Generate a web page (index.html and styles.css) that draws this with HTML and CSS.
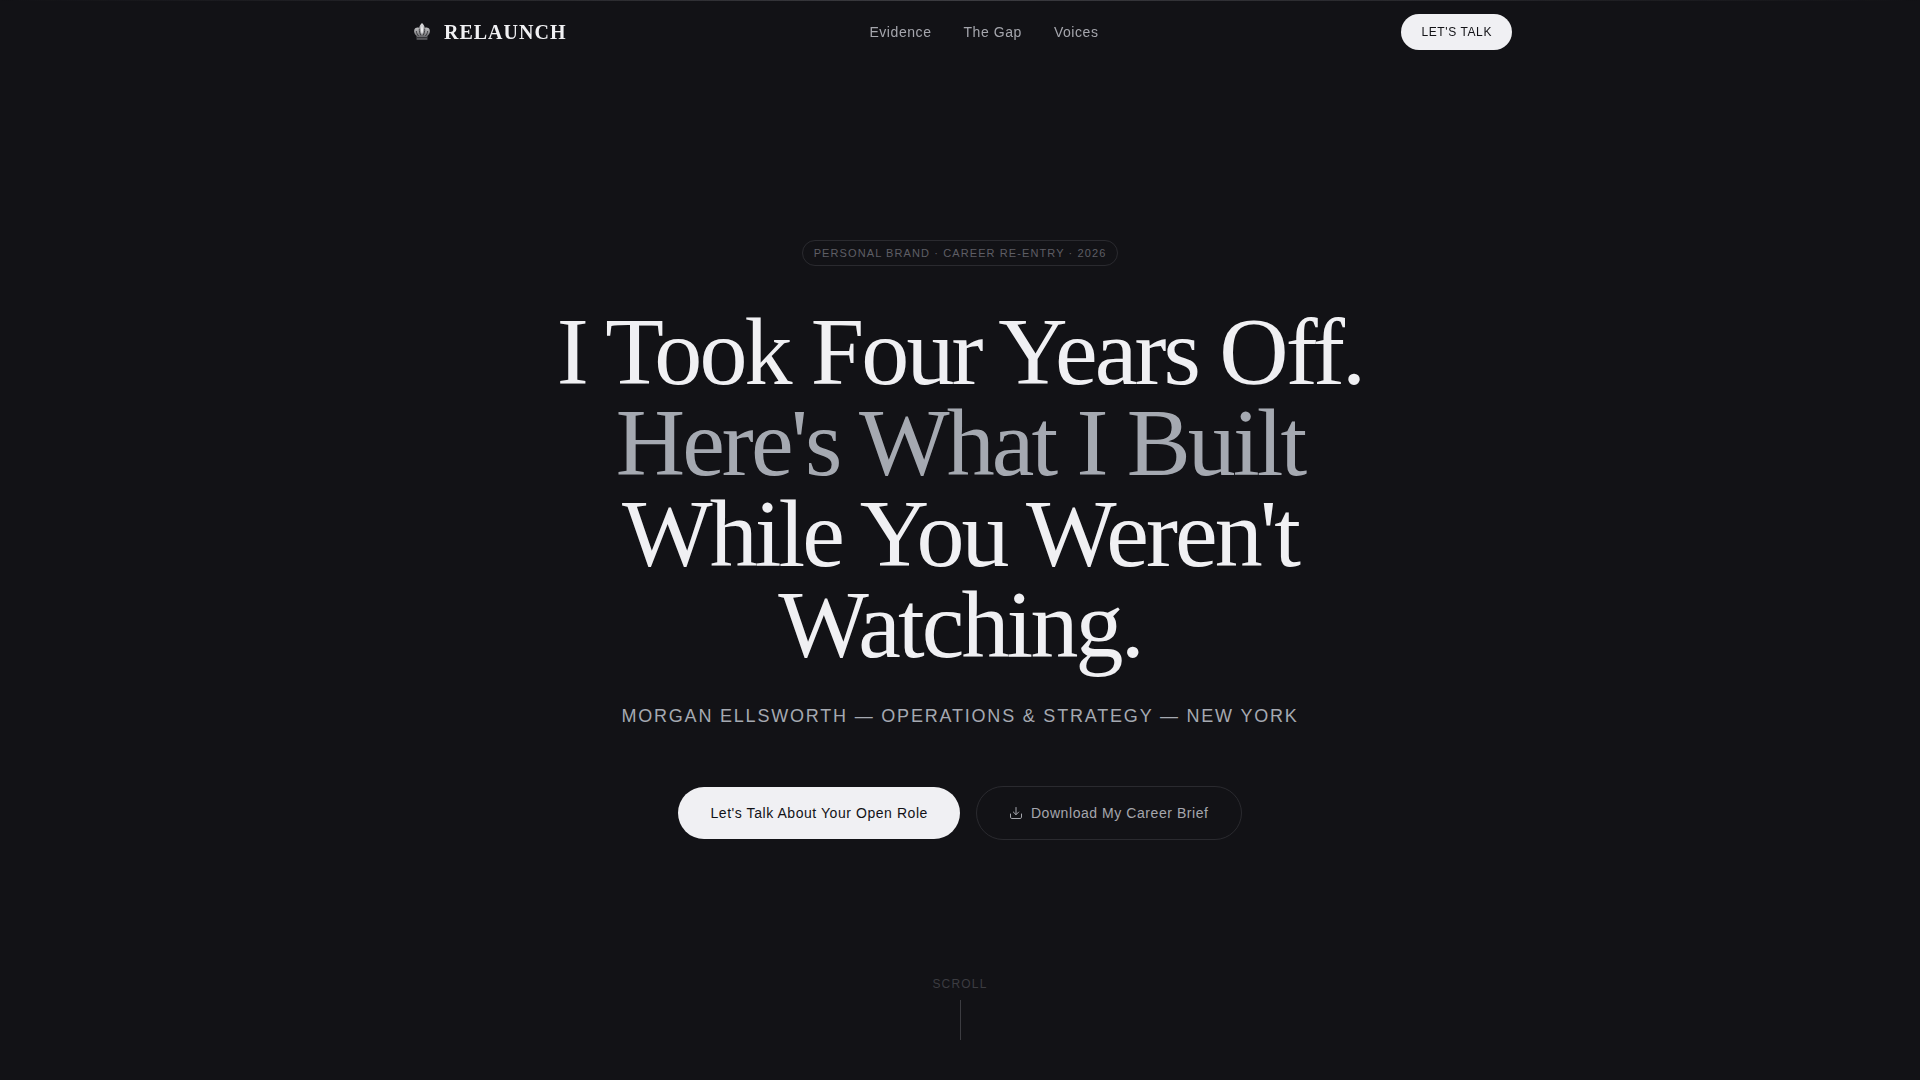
FILE: index.html
```html
<!DOCTYPE html>
<html lang="en">
<head>
  <meta charset="UTF-8">
  <meta name="viewport" content="width=device-width, initial-scale=1.0">
  <title>Relaunch</title>
  <link rel="stylesheet" href="styles.css">
</head>
<body>

  <header class="site-header">
    <nav class="nav">
      <a href="#top" class="logo">
        <svg class="logo-icon" viewBox="0 0 28 28" aria-hidden="true">
          <defs>
            <linearGradient id="silver" x1="0" y1="0" x2="0" y2="1">
              <stop offset="0" stop-color="#e4e4e6" />
              <stop offset="0.55" stop-color="#98989b" />
              <stop offset="1" stop-color="#48484c" />
            </linearGradient>
          </defs>
          <path fill="url(#silver)" d="M14 5c1.800 1.800 2.600 3.400 2.700 5 2-.9 4.300-.2 5 1.800.8 2.300-.6 4.700-2.300 6.300V22H8.600v-3.900C6.900 16.500 5.500 14.100 6.300 11.800c.7-2 3-2.700 5-1.800.1-1.600.9-3.200 2.700-5z" />
          <path fill="none" stroke="#29292d" stroke-width="0.800" d="M11.300 10.500c-.2 3 .5 5 1.700 7M16.700 10.500c.2 3-.5 5-1.700 7M8.300 13c.2 2 1 3.500 2.300 5M19.700 13c-.2 2-1 3.500-2.300 5M9 19.500h10" />
          <path fill="#f1f1f3" d="M14 7.500c1.300 3 1.300 6 0 9-1.300-3-1.300-6 0-9z" />
        </svg>
        <span>RELAUNCH</span>
      </a>
      <div class="nav-links">
        <a href="#evidence">Evidence</a>
        <a href="#gap">The Gap</a>
        <a href="#voices">Voices</a>
      </div>
      <a href="#contact" class="nav-cta">LET'S TALK</a>
    </nav>
  </header>

  <main class="hero" id="top">
    <p class="tag">PERSONAL BRAND · CAREER RE-ENTRY · 2026</p>
    <h1>I Took Four Years Off. <span class="muted">Here's What I Built</span> While You Weren't Watching.</h1>
    <p class="subtitle">MORGAN ELLSWORTH — OPERATIONS &amp; STRATEGY — NEW YORK</p>
    <div class="actions">
      <a href="#contact" class="btn btn-primary">Let's Talk About Your Open Role</a>
      <a href="#brief" class="btn btn-outline">
        <svg class="btn-icon" viewBox="0 0 14 14" aria-hidden="true">
          <path d="M7 1.500v7M4.300 6 7 8.700 9.700 6M1.500 8v3.200c0 .8.600 1.300 1.300 1.300h8.400c.7 0 1.300-.5 1.300-1.300V8" />
        </svg>
        Download My Career Brief
      </a>
    </div>
    <div class="scroll">
      <span>SCROLL</span>
      <div class="scroll-line"></div>
    </div>
  </main>

</body>
</html>
```
FILE: styles.css
```css
* {
  box-sizing: border-box;
}

body {
  margin: 0;
  background: #121216;
  color: #f0f0f3;
  font-family: "Liberation Sans", Arial, sans-serif;
}

a {
  color: inherit;
  text-decoration: none;
}

.site-header {
  position: fixed;
  top: 0;
  left: 0;
  right: 0;
  z-index: 10;
}

/* hairline that fades out at both ends */
.site-header::before {
  content: "";
  position: absolute;
  top: 0;
  left: 0;
  right: 0;
  height: 1px;
  background: linear-gradient(90deg, transparent, #3c3c41, transparent);
}

.nav {
  display: flex;
  align-items: center;
  justify-content: space-between;
  max-width: 1152px;
  height: 64px;
  margin: 0 auto;
  padding: 0 24px;
}

.logo {
  display: flex;
  align-items: center;
  gap: 8px;
  font-family: "Liberation Serif", "Times New Roman", serif;
  font-size: 20px;
  font-weight: bold;
  letter-spacing: 0.05em;
}

.logo-icon {
  width: 28px;
  height: 28px;
}

.nav-links {
  display: flex;
  gap: 32px;
  color: #a5a6ad;
  font-size: 14px;
  letter-spacing: 0.04em;
}

.nav-cta {
  padding: 0 20px;
  border-radius: 18px;
  background: #f0f0f3;
  color: #121216;
  font-size: 12px;
  line-height: 36px;
  letter-spacing: 0.05em;
}

.hero {
  position: relative;
  display: flex;
  flex-direction: column;
  align-items: center;
  justify-content: center;
  min-height: 100vh;
  padding: 64px 24px;
  text-align: center;
}

.tag {
  margin: 0 0 40px;
  padding: 0 11px;
  border: 1px solid #2a2a2f;
  border-radius: 13px;
  color: #5e5e65;
  font-size: 11px;
  line-height: 24px;
  letter-spacing: 0.1em;
}

h1 {
  max-width: 896px;
  margin: 0 0 32px;
  font-family: "Liberation Serif", "Times New Roman", serif;
  font-size: 96px;
  font-weight: normal;
  line-height: 0.95;
  letter-spacing: -0.03em;
}

.muted {
  color: #a5a9b1;
}

.subtitle {
  margin: 0 0 56px;
  color: #a5a9b1;
  font-size: 18px;
  line-height: 28px;
  letter-spacing: 0.1em;
}

.actions {
  display: flex;
  align-items: center;
  gap: 16px;
}

.btn {
  display: flex;
  align-items: center;
  gap: 8px;
  padding: 0 32px;
  border-radius: 27px;
  font-size: 14px;
  line-height: 52px;
  letter-spacing: 0.04em;
}

.btn-primary {
  background: #f0f0f3;
  color: #121216;
}

.btn-outline {
  border: 1px solid #2a2a2f;
  color: #a5a6ad;
}

.btn-icon {
  width: 14px;
  height: 14px;
  fill: none;
  stroke: currentColor;
  stroke-linecap: round;
  stroke-linejoin: round;
}

.scroll {
  position: absolute;
  bottom: 40px;
  left: 0;
  right: 0;
  display: flex;
  flex-direction: column;
  align-items: center;
  gap: 8px;
  color: #3c3c41;
  font-size: 12px;
  line-height: 16px;
  letter-spacing: 0.1em;
}

.scroll-line {
  width: 1px;
  height: 40px;
  background: #3c3c41;
}

@media (max-width: 900px) {
  .nav-links {
    display: none;
  }

  h1 {
    font-size: 56px;
  }

  .actions {
    flex-direction: column;
  }
}
```
